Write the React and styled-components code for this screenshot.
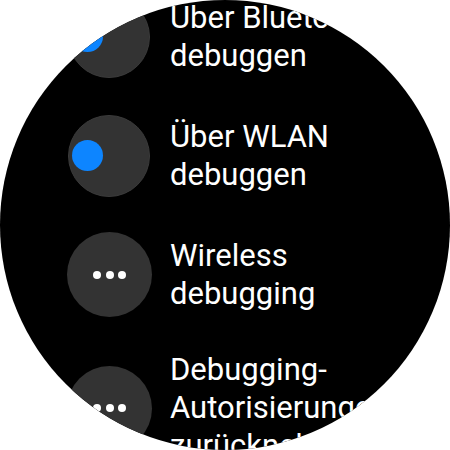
import React from 'react';
import styled, { createGlobalStyle } from 'styled-components';

const GlobalStyle = createGlobalStyle`
  html, body {
    margin: 0;
    padding: 0;
    background: #ffffff;
  }
  * {
    box-sizing: border-box;
  }
`;

const Screen = styled.div`
  width: 450px;
  height: 450px;
  border-radius: 50%;
  background: #000000;
  overflow: hidden;
  font-family: Roboto, 'Noto Sans', sans-serif;
  color: #ffffff;
`;

/* list is scrolled a bit: first row sits partly above the top */
const List = styled.div`
  display: flex;
  flex-direction: column;
  margin-top: -23px;
`;

const Row = styled.div`
  display: flex;
  align-items: center;
  gap: ${(p) => (p.$toggle ? 20 : 18)}px;
  min-height: 119px;
  padding: 17px 20px 17px ${(p) => (p.$toggle ? 68 : 67)}px;
`;

const IconCircle = styled.div`
  flex: none;
  width: ${(p) => (p.$toggle ? 82 : 85)}px;
  height: ${(p) => (p.$toggle ? 82 : 85)}px;
  border-radius: 50%;
  background: #333333;
  border: ${(p) => (p.$toggle ? '1px solid #3b3b3b' : 'none')};
  display: flex;
  align-items: center;
  justify-content: ${(p) => (p.$toggle ? 'flex-start' : 'center')};
  padding-left: ${(p) => (p.$toggle ? 3 : 0)}px;
  gap: 4.6px;
`;

const Knob = styled.div`
  width: 31px;
  height: 31px;
  border-radius: 50%;
  background: #0d85ff;
`;

const Dot = styled.div`
  width: 8px;
  height: 8px;
  border-radius: 50%;
  background: #ffffff;
`;

const Label = styled.div`
  font-size: 31px;
  line-height: 38px;
  max-width: 260px;
`;

const items = [
  { label: 'Über Bluetooth debuggen', toggle: true },
  { label: 'Über WLAN debuggen', toggle: true },
  { label: 'Wireless debugging', toggle: false },
  { label: 'Debugging-Autorisierungen zurücknehmen', toggle: false },
];

const MoreIcon = () => (
  <>
    <Dot />
    <Dot />
    <Dot />
  </>
);

export default function App() {
  return (
    <>
      <GlobalStyle />
      <Screen>
        <List>
          {items.map((it) => (
            <Row key={it.label} $toggle={it.toggle}>
              <IconCircle $toggle={it.toggle}>
                {it.toggle ? <Knob /> : <MoreIcon />}
              </IconCircle>
              <Label>{it.label}</Label>
            </Row>
          ))}
        </List>
      </Screen>
    </>
  );
}
